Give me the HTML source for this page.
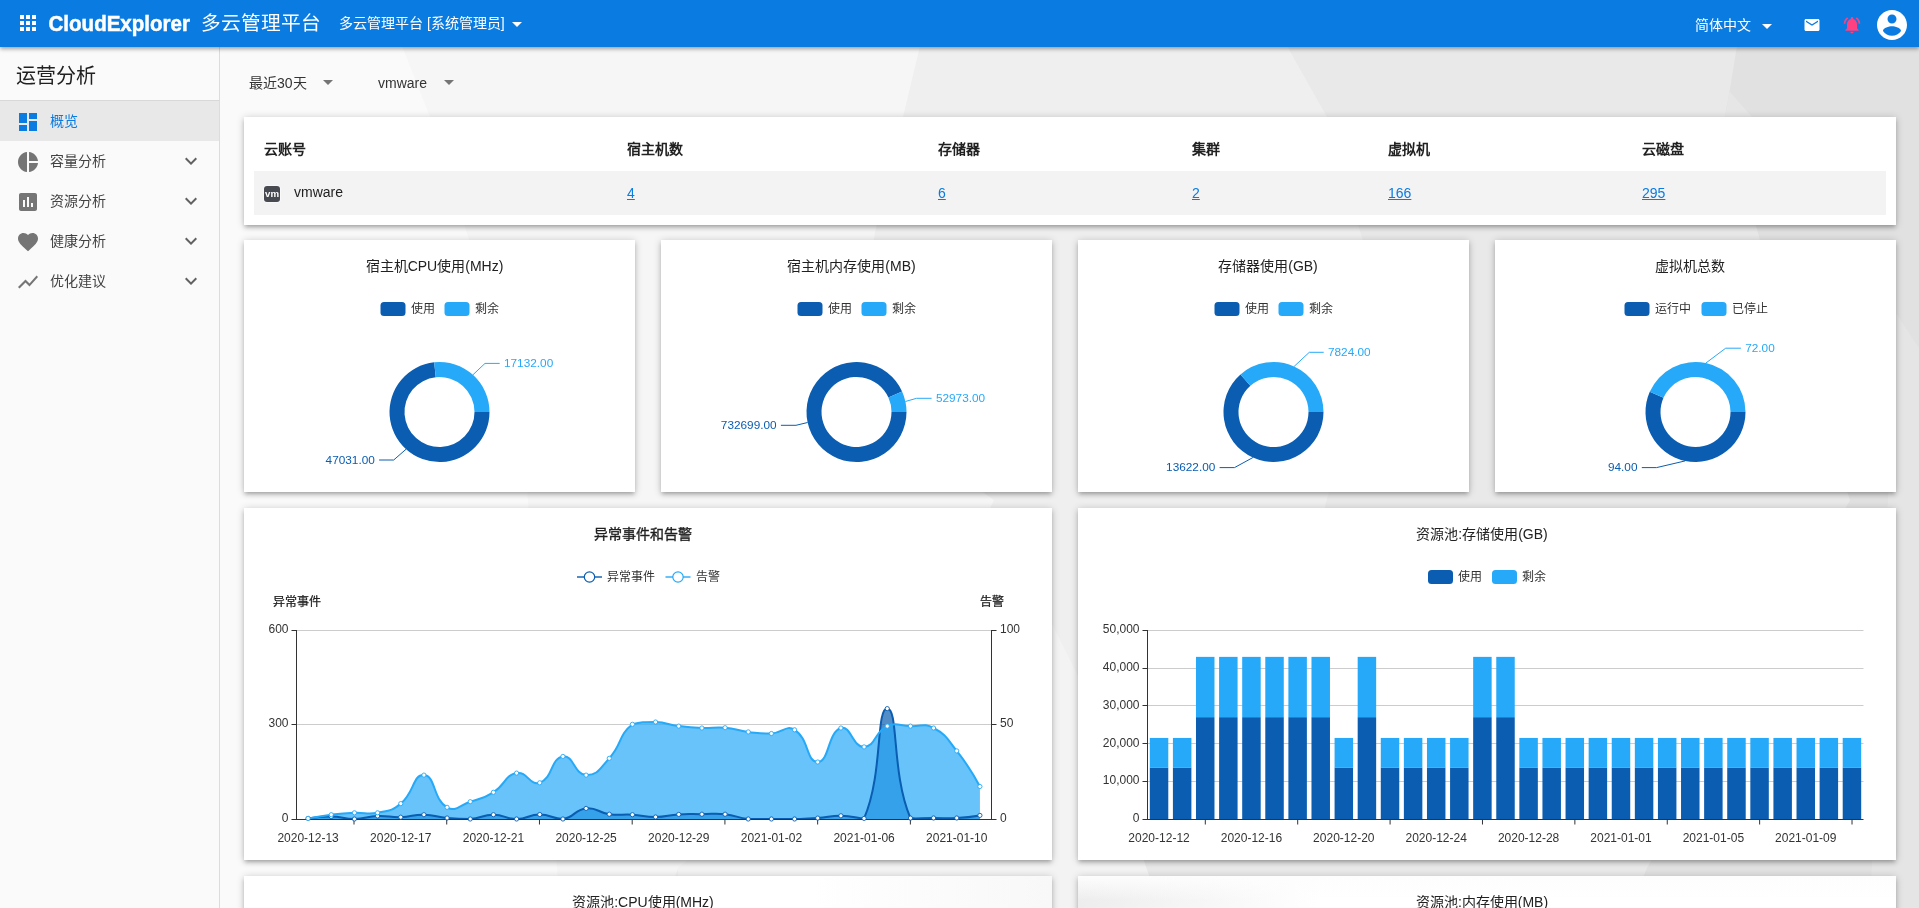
<!DOCTYPE html>
<html lang="zh-CN"><head><meta charset="utf-8"><title>CloudExplorer</title>
<style>
*{box-sizing:border-box;margin:0;padding:0}
html,body{width:1919px;height:908px;overflow:hidden}
body{position:relative;background:#f2f2f2;font-family:"Liberation Sans",sans-serif;color:#212121;font-size:14px}
.abs,.card,.ic,.t{position:absolute}
.t{white-space:nowrap;line-height:20px;margin-top:-10px}
.c{transform:translateX(-50%)}
.card{background:#fff;box-shadow:0 1px 8px 0 rgba(0,0,0,.2),0 3px 4px 0 rgba(0,0,0,.14),0 3px 3px -2px rgba(0,0,0,.12)}
.f12{font-size:12px;color:#333}
.b{font-weight:bold}
.lnk{color:#0a7be0;text-decoration:underline}
.mi{color:#424242}
svg text{font-family:"Liberation Sans",sans-serif}
#L{position:absolute;left:0;top:0;width:1919px;height:908px;will-change:transform}
</style></head><body><div id="L">
<svg class="abs" style="left:0;top:0" width="1919" height="908" viewBox="0 0 1919 908">
<rect x="220" y="0" width="1699" height="908" fill="#fafafa"/>
<polygon points="402,46 430,117 520,400 560,908 1919,908 1919,46" fill="#f6f6f6"/>
<polygon points="920,46 903,117 875,232 850,400 994,500 900,700 678,868 665,908 1919,908 1919,46" fill="#efefef"/>
<polygon points="1040,600 1090,700 1143,858 1150,878 1150,908 678,908 678,868 900,700" fill="#f3f3f3"/>
<polygon points="1287,46 1327,117 1380,300 1300,600 1143,858 1150,878 1150,908 1919,908 1919,46" fill="#e9e9e9"/>
<polygon points="1737,46 1729.5,91.6 1725,117 1760,240 1850,500 1647,868 1630,908 1919,908 1919,46" fill="#e1e1e1"/>
<polygon points="1729.5,91.6 1725,117 1752,117" fill="#e6e6e6"/>
<polygon points="1896,313 1919,348 1919,908 1870,908" fill="#e5e5e5"/>
</svg>
<div class="abs" style="left:0;top:46px;width:220px;height:862px;background:#fafafa;border-right:1px solid #dcdcdc"></div>
<div class="t " style="left:16px;top:76px;font-size:20px;line-height:28px;margin-top:-14px;color:#212121">运营分析</div>
<div class="abs" style="left:0;top:100px;width:219px;height:41px;background:#e8e8e8;border-top:1px solid #d8d8d8"></div>
<svg class="ic" style="left:16px;top:109.5px" width="24" height="24" viewBox="0 0 24 24"><path fill="#0a7be0" d="M3 13h8V3H3v10zm0 8h8v-6H3v6zm10 0h8V11h-8v10zm0-18v6h8V3h-8z"/></svg>
<div class="t " style="left:50px;top:120.5px;color:#0a7be0">概览</div>
<svg class="ic" style="left:16px;top:149.5px" width="24" height="24" viewBox="0 0 24 24"><path fill="#757575" d="M11 2v20c-5.07-.5-9-4.79-9-10s3.93-9.5 9-10zm2.03 0v8.99H22c-.47-4.74-4.24-8.52-8.97-8.99zm0 11.01V22c4.74-.47 8.5-4.25 8.97-8.99h-8.97z"/></svg>
<div class="t " style="left:50px;top:160.5px;color:#424242">容量分析</div>
<svg class="ic" style="left:179px;top:148.5px" width="24" height="24" viewBox="0 0 24 24"><path fill="#616161" d="M7.41 8.59L12 13.17l4.59-4.58L18 10l-6 6-6-6 1.41-1.41z"/></svg>
<svg class="ic" style="left:16px;top:189.5px" width="24" height="24" viewBox="0 0 24 24"><path fill="#757575" d="M19 3H5c-1.1 0-2 .9-2 2v14c0 1.1.9 2 2 2h14c1.1 0 2-.9 2-2V5c0-1.1-.9-2-2-2zM9 17H7v-7h2v7zm4 0h-2V7h2v10zm4 0h-2v-4h2v4z"/></svg>
<div class="t " style="left:50px;top:200.5px;color:#424242">资源分析</div>
<svg class="ic" style="left:179px;top:188.5px" width="24" height="24" viewBox="0 0 24 24"><path fill="#616161" d="M7.41 8.59L12 13.17l4.59-4.58L18 10l-6 6-6-6 1.41-1.41z"/></svg>
<svg class="ic" style="left:16px;top:229.5px" width="24" height="24" viewBox="0 0 24 24"><path fill="#757575" d="M12 21.35l-1.45-1.32C5.4 15.36 2 12.28 2 8.5 2 5.42 4.42 3 7.5 3c1.74 0 3.41.81 4.5 2.09C13.09 3.81 14.76 3 16.5 3 19.58 3 22 5.42 22 8.5c0 3.78-3.4 6.86-8.55 11.54L12 21.35z"/></svg>
<div class="t " style="left:50px;top:240.5px;color:#424242">健康分析</div>
<svg class="ic" style="left:179px;top:228.5px" width="24" height="24" viewBox="0 0 24 24"><path fill="#616161" d="M7.41 8.59L12 13.17l4.59-4.58L18 10l-6 6-6-6 1.41-1.41z"/></svg>
<svg class="ic" style="left:16px;top:269.5px" width="24" height="24" viewBox="0 0 24 24"><path fill="#757575" d="M3.5 18.49l6-6.01 4 4L22 6.92l-1.41-1.41-7.09 7.97-4-4L2 16.99z"/></svg>
<div class="t " style="left:50px;top:280.5px;color:#424242">优化建议</div>
<svg class="ic" style="left:179px;top:268.5px" width="24" height="24" viewBox="0 0 24 24"><path fill="#616161" d="M7.41 8.59L12 13.17l4.59-4.58L18 10l-6 6-6-6 1.41-1.41z"/></svg>
<div class="abs" style="left:0;top:0;width:1919px;height:46.5px;background:#0a7be0;box-shadow:0 2px 4px rgba(0,0,0,.35)"></div>
<svg class="ic" style="left:16px;top:11px" width="24" height="24" viewBox="0 0 24 24"><path fill="#fff" d="M4 8h4V4H4v4zm6 12h4v-4h-4v4zm-6 0h4v-4H4v4zm0-6h4v-4H4v4zm6 0h4v-4h-4v4zm6-10v4h4V4h-4zm-6 4h4V4h-4v4zm6 6h4v-4h-4v4zm0 6h4v-4h-4v4z"/></svg>
<svg class="abs" style="left:48px;top:8px" width="146" height="32"><text x="0.5" y="23" font-size="22" font-weight="bold" fill="#fff" stroke="#fff" stroke-width="0.5" textLength="141.5" lengthAdjust="spacingAndGlyphs">CloudExplorer</text></svg>
<div class="t " style="left:201px;top:23px;font-size:19.7px;color:#fff;line-height:28px;margin-top:-14px">多云管理平台</div>
<div class="t " style="left:339px;top:23px;color:#fff">多云管理平台 [系统管理员]</div>
<svg class="ic" style="left:505px;top:12px" width="24" height="24" viewBox="0 0 24 24"><path fill="#fff" d="M7 10l5 5 5-5z"/></svg>
<div class="t " style="left:1695px;top:25px;color:#fff">简体中文</div>
<svg class="ic" style="left:1755px;top:13.5px" width="24" height="24" viewBox="0 0 24 24"><path fill="#fff" d="M7 10l5 5 5-5z"/></svg>
<svg class="ic" style="left:1803px;top:15.7px" width="18" height="18" viewBox="0 0 24 24"><path fill="#fff" d="M20 4H4c-1.1 0-1.99.9-1.99 2L2 18c0 1.1.9 2 2 2h16c1.1 0 2-.9 2-2V6c0-1.1-.9-2-2-2zm0 4l-8 5-8-5V6l8 5 8-5v2z"/></svg>
<svg class="ic" style="left:1842px;top:14.7px" width="20" height="20" viewBox="0 0 24 24"><path fill="#ff4081" d="M7.58 4.08L6.15 2.65C3.75 4.48 2.17 7.3 2.03 10.5h2c.15-2.65 1.51-4.97 3.55-6.42zm12.39 6.42h2c-.15-3.2-1.73-6.02-4.12-7.85l-1.42 1.43c2.02 1.45 3.39 3.77 3.54 6.42zM18 11c0-3.07-1.64-5.64-4.5-6.32V4c0-.83-.67-1.5-1.5-1.5s-1.5.67-1.5 1.5v.68C7.63 5.36 6 7.92 6 11v5l-2 2v1h16v-1l-2-2v-5zm-6 11c.14 0 .27-.01.4-.04.65-.14 1.18-.58 1.44-1.18.1-.24.15-.5.15-.78h-4c.01 1.1.9 2 2.01 2z"/></svg>
<svg class="ic" style="left:1874px;top:6.7px" width="36" height="36" viewBox="0 0 24 24"><path fill="#fff" d="M12 2C6.48 2 2 6.48 2 12s4.48 10 10 10 10-4.48 10-10S17.52 2 12 2zm0 3c1.66 0 3 1.34 3 3s-1.34 3-3 3-3-1.34-3-3 1.34-3 3-3zm0 14.2c-2.5 0-4.71-1.28-6-3.22.03-1.99 4-3.08 6-3.08 1.99 0 5.97 1.09 6 3.08-1.29 1.94-3.5 3.22-6 3.22z"/></svg>
<div class="t " style="left:249px;top:83px;color:#333">最近30天</div>
<svg class="ic" style="left:315.5px;top:70px" width="24" height="24" viewBox="0 0 24 24"><path fill="#757575" d="M7 10l5 5 5-5z"/></svg>
<div class="t " style="left:378px;top:83px;color:#333">vmware</div>
<svg class="ic" style="left:436.5px;top:70px" width="24" height="24" viewBox="0 0 24 24"><path fill="#757575" d="M7 10l5 5 5-5z"/></svg>
<div class="card" style="left:244px;top:117px;width:1652px;height:108px"></div>
<div class="abs" style="left:254px;top:171px;width:1632px;height:44px;background:#f3f3f3"></div>
<div class="card" style="left:244px;top:240px;width:391px;height:252px"></div>
<div class="card" style="left:661px;top:240px;width:391px;height:252px"></div>
<div class="card" style="left:1078px;top:240px;width:391px;height:252px"></div>
<div class="card" style="left:1495px;top:240px;width:401px;height:252px"></div>
<div class="card" style="left:244px;top:508px;width:808px;height:352px"></div>
<div class="card" style="left:1078px;top:508px;width:818px;height:352px"></div>
<div class="card" style="left:244px;top:876px;width:808px;height:60px;background:linear-gradient(90deg,#fff 0,#fff 70%,#f8f8f8 100%)"></div>
<div class="card" style="left:1078px;top:876px;width:818px;height:60px;background:linear-gradient(180deg,#fdfdfd 0,rgba(255,255,255,0) 24px),linear-gradient(90deg,#ededed 0,#fff 240px)"></div>
<div class="t b" style="left:264px;top:149px;color:#212121">云账号</div>
<div class="t b" style="left:627px;top:149px;color:#212121">宿主机数</div>
<div class="t lnk" style="left:627px;top:193px;">4</div>
<div class="t b" style="left:938px;top:149px;color:#212121">存储器</div>
<div class="t lnk" style="left:938px;top:193px;">6</div>
<div class="t b" style="left:1192px;top:149px;color:#212121">集群</div>
<div class="t lnk" style="left:1192px;top:193px;">2</div>
<div class="t b" style="left:1388px;top:149px;color:#212121">虚拟机</div>
<div class="t lnk" style="left:1388px;top:193px;">166</div>
<div class="t b" style="left:1642px;top:149px;color:#212121">云磁盘</div>
<div class="t lnk" style="left:1642px;top:193px;">295</div>
<svg class="abs" style="left:263px;top:185px" width="18" height="18" viewBox="0 0 18 18"><rect x="0.5" y="0.5" width="17" height="17" rx="3.5" fill="#fff"/><rect x="1" y="1" width="16" height="16" rx="3" fill="#484a52"/><text x="2" y="11.7" font-size="9.5" font-weight="bold" fill="#fff" textLength="14" lengthAdjust="spacingAndGlyphs">vm</text></svg>
<div class="t " style="left:294px;top:192px;color:#212121">vmware</div>
<div class="t c" style="left:434.5px;top:266px;">宿主机CPU使用(MHz)</div>
<div class="t c" style="left:851.5px;top:266px;">宿主机内存使用(MB)</div>
<div class="t c" style="left:1268px;top:266px;">存储器使用(GB)</div>
<div class="t c" style="left:1690px;top:266px;">虚拟机总数</div>
<div class="t c" style="left:643px;top:534px;-webkit-text-stroke:0.35px #212121">异常事件和告警</div>
<div class="t c" style="left:1482px;top:534px;">资源池:存储使用(GB)</div>
<div class="t c" style="left:643px;top:902px;">资源池:CPU使用(MHz)</div>
<div class="t c" style="left:1482px;top:902px;">资源池:内存使用(MB)</div>
<div class="t f12" style="left:410.5px;top:308.5px;">使用</div>
<div class="t f12" style="left:474.5px;top:308.5px;">剩余</div>
<div class="t f12" style="left:827.5px;top:308.5px;">使用</div>
<div class="t f12" style="left:891.5px;top:308.5px;">剩余</div>
<div class="t f12" style="left:1244.5px;top:308.5px;">使用</div>
<div class="t f12" style="left:1308.5px;top:308.5px;">剩余</div>
<div class="t f12" style="left:1654.5px;top:308.5px;">运行中</div>
<div class="t f12" style="left:1731.5px;top:308.5px;">已停止</div>
<div class="t f12" style="left:1458px;top:576.5px;">使用</div>
<div class="t f12" style="left:1522px;top:576.5px;">剩余</div>
<div class="t f12" style="left:607px;top:576.5px;">异常事件</div>
<div class="t f12" style="left:695.5px;top:576.5px;">告警</div>
<div class="t f12 c" style="left:296.5px;top:602px;color:#222;-webkit-text-stroke:0.25px #222">异常事件</div>
<div class="t f12 c" style="left:991.5px;top:602px;color:#222;-webkit-text-stroke:0.25px #222">告警</div>
<svg class="abs" style="left:0;top:0" width="1919" height="908" viewBox="0 0 1919 908">
<path d="M489.5 412A50 50 0 1 1 434.17 362.29L435.77 377.2A35 35 0 1 0 474.5 412Z" fill="#0a5db1"/>
<path d="M434.17 362.29A50 50 0 0 1 489.5 412L474.5 412A35 35 0 0 0 435.77 377.2Z" fill="#26a9f8"/>
<polyline points="406.08,449.19 393.7,460 379.1,460" fill="none" stroke="#0a5db1" stroke-width="1"/>
<text x="374.8" y="463.7" fill="#0a5db1" font-size="11.8" text-anchor="end">47031.00</text>
<polyline points="472.92,374.81 485,363.4 499.7,363.4" fill="none" stroke="#26a9f8" stroke-width="1"/>
<text x="504" y="367.1" fill="#26a9f8" font-size="11.8" text-anchor="start">17132.00</text>
<path d="M906.5 412A50 50 0 1 1 902.08 391.45L888.41 397.61A35 35 0 1 0 891.5 412Z" fill="#0a5db1"/>
<path d="M902.08 391.45A50 50 0 0 1 906.5 412L891.5 412A35 35 0 0 0 888.41 397.61Z" fill="#26a9f8"/>
<polyline points="807.62,422.51 796,425.3 780.9,425.3" fill="none" stroke="#0a5db1" stroke-width="1"/>
<text x="776.6" y="429" fill="#0a5db1" font-size="11.8" text-anchor="end">732699.00</text>
<polyline points="905.38,401.49 916.6,398.3 931.6,398.3" fill="none" stroke="#26a9f8" stroke-width="1"/>
<text x="935.9" y="402" fill="#26a9f8" font-size="11.8" text-anchor="start">52973.00</text>
<path d="M1323.5 412A50 50 0 1 1 1240.48 374.46L1250.38 385.72A35 35 0 1 0 1308.5 412Z" fill="#0a5db1"/>
<path d="M1240.48 374.46A50 50 0 0 1 1323.5 412L1308.5 412A35 35 0 0 0 1250.38 385.72Z" fill="#26a9f8"/>
<polyline points="1252.9,457.56 1234.5,467.6 1219.6,467.6" fill="none" stroke="#0a5db1" stroke-width="1"/>
<text x="1215.3" y="471.3" fill="#0a5db1" font-size="11.8" text-anchor="end">13622.00</text>
<polyline points="1294.1,366.44 1309.3,352.3 1323.7,352.3" fill="none" stroke="#26a9f8" stroke-width="1"/>
<text x="1328" y="356" fill="#26a9f8" font-size="11.8" text-anchor="start">7824.00</text>
<path d="M1745.5 412A50 50 0 1 1 1649.77 391.78L1663.49 397.84A35 35 0 1 0 1730.5 412Z" fill="#0a5db1"/>
<path d="M1649.77 391.78A50 50 0 0 1 1745.5 412L1730.5 412A35 35 0 0 0 1663.49 397.84Z" fill="#26a9f8"/>
<polyline points="1685.17,460.92 1656.6,467.6 1641.8,467.6" fill="none" stroke="#0a5db1" stroke-width="1"/>
<text x="1637.5" y="471.3" fill="#0a5db1" font-size="11.8" text-anchor="end">94.00</text>
<polyline points="1705.83,363.08 1725.7,348.2 1740.9,348.2" fill="none" stroke="#26a9f8" stroke-width="1"/>
<text x="1745.2" y="351.9" fill="#26a9f8" font-size="11.8" text-anchor="start">72.00</text>
<rect x="380.5" y="302" width="25" height="14" rx="3.5" fill="#0a5db1"/>
<rect x="444.5" y="302" width="25" height="14" rx="3.5" fill="#26a9f8"/>
<rect x="797.5" y="302" width="25" height="14" rx="3.5" fill="#0a5db1"/>
<rect x="861.5" y="302" width="25" height="14" rx="3.5" fill="#26a9f8"/>
<rect x="1214.5" y="302" width="25" height="14" rx="3.5" fill="#0a5db1"/>
<rect x="1278.5" y="302" width="25" height="14" rx="3.5" fill="#26a9f8"/>
<rect x="1624.5" y="302" width="25" height="14" rx="3.5" fill="#0a5db1"/>
<rect x="1701.5" y="302" width="25" height="14" rx="3.5" fill="#26a9f8"/>
<rect x="1428" y="570" width="25" height="14" rx="3.5" fill="#0a5db1"/>
<rect x="1492" y="570" width="25" height="14" rx="3.5" fill="#26a9f8"/>
<line x1="577" y1="577" x2="602" y2="577" stroke="#0a5db1" stroke-width="2" stroke-opacity="0.7"/>
<circle cx="589.5" cy="577" r="5.2" fill="#fff" stroke="#0a5db1" stroke-width="1.2"/>
<line x1="665.5" y1="577" x2="690.5" y2="577" stroke="#26a9f8" stroke-width="2" stroke-opacity="0.7"/>
<circle cx="678" cy="577" r="5.2" fill="#fff" stroke="#26a9f8" stroke-width="1.2"/>
<line x1="296.5" y1="630.5" x2="991.5" y2="630.5" stroke="#ccc" stroke-width="1"/>
<line x1="296.5" y1="724.5" x2="991.5" y2="724.5" stroke="#ccc" stroke-width="1"/>
<path d="M308.08 818.4C308.08 818.4 319.68 816.35 331.25 816.5C342.85 816.65 342.85 819 354.42 819C366.01 818.87 365.96 816.45 377.58 816C389.13 815.55 389.19 817.52 400.75 817.2C412.36 816.87 412.36 814.5 423.92 814.7C435.52 814.9 435.45 816.92 447.08 818C458.61 819 458.76 819 470.25 819C481.93 818.17 481.83 814.7 493.42 814.7C505 814.7 505.01 819 516.58 819C528.18 818.95 528.17 814.5 539.75 814.5C551.33 814.5 551.78 819 562.92 819C574.94 817.42 574.13 809.64 586.08 808.4C597.29 807.24 597.49 812.6 609.25 814.2C620.66 815.75 620.86 814 632.42 814.7C644.03 815.4 644.01 817.07 655.58 817C667.17 816.92 667.13 815.1 678.75 814.4C690.3 813.7 690.33 814.25 701.92 814.2C713.5 814.15 713.62 813.01 725.08 814.2C736.79 815.41 736.54 817.79 748.25 819C759.71 819 759.83 819 771.42 819C783 819 783 819 794.58 819C806.17 818.77 806.19 818.9 817.75 818.1C829.36 817.3 829.34 815.73 840.92 815.8C852.51 815.88 860.1 819 864.08 818.4C883.27 774.02 875.65 708.68 887.25 708.6C898.82 708.6 891.22 772.78 910.42 818.1C914.39 819 922 818.03 933.58 818C945.17 817.98 945.2 818.65 956.75 818C968.37 817.35 979.92 815.4 979.92 815.4L979.92 819L308.08 819Z" fill="#0a5db1" fill-opacity="0.7"/>
<path d="M308.08 818.4C308.08 818.4 319.61 816.11 331.25 814.7C342.78 813.31 342.81 813.28 354.42 812.8C365.98 812.33 366.42 815.02 377.58 812.8C389.59 810.42 391.38 811.22 400.75 803.6C414.55 792.37 412.78 774.21 423.92 775.1C435.95 776.06 432.61 798.99 447.08 807.3C455.78 812.29 458.94 805.36 470.25 801.7C482.11 797.86 482.9 798.79 493.42 792.3C506.07 784.49 503.96 775.69 516.58 773.1C527.12 770.94 530.09 786.28 539.75 782.8C553.26 777.93 550.38 758.48 562.92 756.4C573.54 754.63 574.27 774.62 586.08 775.1C597.44 775.57 599.75 768.72 609.25 758.3C622.91 743.32 617.62 735.89 632.42 724.3C640.79 722 644.06 722 655.58 722C667.23 722.45 667.1 724.59 678.75 726.1C690.26 727.59 690.31 727.6 701.92 728C713.48 728.4 713.59 726.73 725.08 727.7C736.76 728.68 736.59 730.44 748.25 731.9C759.75 733.34 759.89 734.02 771.42 733.5C783.06 732.97 785.97 724.5 794.58 729.8C809.14 738.75 806.38 762.44 817.75 762C829.54 761.54 827.5 732.37 840.92 728C850.67 724.82 852.73 747.37 864.08 746.9C875.9 746.42 873.97 732.06 887.25 726.1C897.13 722 898.85 725.63 910.42 726.1C922.02 726.58 923.94 722.84 933.58 728C947.1 735.24 946.69 738.2 956.75 750.9C969.86 767.45 979.92 786.5 979.92 786.5L979.92 819L308.08 819Z" fill="#26a9f8" fill-opacity="0.7"/>
<path d="M308.08 818.4C308.08 818.4 319.68 816.35 331.25 816.5C342.85 816.65 342.85 819 354.42 819C366.01 818.87 365.96 816.45 377.58 816C389.13 815.55 389.19 817.52 400.75 817.2C412.36 816.87 412.36 814.5 423.92 814.7C435.52 814.9 435.45 816.92 447.08 818C458.61 819 458.76 819 470.25 819C481.93 818.17 481.83 814.7 493.42 814.7C505 814.7 505.01 819 516.58 819C528.18 818.95 528.17 814.5 539.75 814.5C551.33 814.5 551.78 819 562.92 819C574.94 817.42 574.13 809.64 586.08 808.4C597.29 807.24 597.49 812.6 609.25 814.2C620.66 815.75 620.86 814 632.42 814.7C644.03 815.4 644.01 817.07 655.58 817C667.17 816.92 667.13 815.1 678.75 814.4C690.3 813.7 690.33 814.25 701.92 814.2C713.5 814.15 713.62 813.01 725.08 814.2C736.79 815.41 736.54 817.79 748.25 819C759.71 819 759.83 819 771.42 819C783 819 783 819 794.58 819C806.17 818.77 806.19 818.9 817.75 818.1C829.36 817.3 829.34 815.73 840.92 815.8C852.51 815.88 860.1 819 864.08 818.4C883.27 774.02 875.65 708.68 887.25 708.6C898.82 708.6 891.22 772.78 910.42 818.1C914.39 819 922 818.03 933.58 818C945.17 817.98 945.2 818.65 956.75 818C968.37 817.35 979.92 815.4 979.92 815.4" fill="none" stroke="#0a5db1" stroke-width="2" stroke-linejoin="round"/>
<path d="M308.08 818.4C308.08 818.4 319.61 816.11 331.25 814.7C342.78 813.31 342.81 813.28 354.42 812.8C365.98 812.33 366.42 815.02 377.58 812.8C389.59 810.42 391.38 811.22 400.75 803.6C414.55 792.37 412.78 774.21 423.92 775.1C435.95 776.06 432.61 798.99 447.08 807.3C455.78 812.29 458.94 805.36 470.25 801.7C482.11 797.86 482.9 798.79 493.42 792.3C506.07 784.49 503.96 775.69 516.58 773.1C527.12 770.94 530.09 786.28 539.75 782.8C553.26 777.93 550.38 758.48 562.92 756.4C573.54 754.63 574.27 774.62 586.08 775.1C597.44 775.57 599.75 768.72 609.25 758.3C622.91 743.32 617.62 735.89 632.42 724.3C640.79 722 644.06 722 655.58 722C667.23 722.45 667.1 724.59 678.75 726.1C690.26 727.59 690.31 727.6 701.92 728C713.48 728.4 713.59 726.73 725.08 727.7C736.76 728.68 736.59 730.44 748.25 731.9C759.75 733.34 759.89 734.02 771.42 733.5C783.06 732.97 785.97 724.5 794.58 729.8C809.14 738.75 806.38 762.44 817.75 762C829.54 761.54 827.5 732.37 840.92 728C850.67 724.82 852.73 747.37 864.08 746.9C875.9 746.42 873.97 732.06 887.25 726.1C897.13 722 898.85 725.63 910.42 726.1C922.02 726.58 923.94 722.84 933.58 728C947.1 735.24 946.69 738.2 956.75 750.9C969.86 767.45 979.92 786.5 979.92 786.5" fill="none" stroke="#26a9f8" stroke-width="2" stroke-linejoin="round"/>
<path d="M296.5 630V820 M991.5 630V820 M296.5 819.5H991.5" stroke="#333" stroke-width="1" fill="none"/>
<path d="M291.5 630.5H296.5 M991.5 630.5H996.5M291.5 724.5H296.5 M991.5 724.5H996.5M291.5 819.5H296.5 M991.5 819.5H996.5M354 819.5V824.5M446.73 819.5V824.5M539.46 819.5V824.5M632.19 819.5V824.5M724.92 819.5V824.5M817.65 819.5V824.5M910.38 819.5V824.5" stroke="#333" stroke-width="1" fill="none"/>
<circle cx="308.08" cy="818.4" r="2.1" fill="#fff" stroke="#0a5db1" stroke-width="0.9"/>
<circle cx="331.25" cy="816.5" r="2.1" fill="#fff" stroke="#0a5db1" stroke-width="0.9"/>
<circle cx="354.42" cy="819" r="2.1" fill="#fff" stroke="#0a5db1" stroke-width="0.9"/>
<circle cx="377.58" cy="816" r="2.1" fill="#fff" stroke="#0a5db1" stroke-width="0.9"/>
<circle cx="400.75" cy="817.2" r="2.1" fill="#fff" stroke="#0a5db1" stroke-width="0.9"/>
<circle cx="423.92" cy="814.7" r="2.1" fill="#fff" stroke="#0a5db1" stroke-width="0.9"/>
<circle cx="447.08" cy="818" r="2.1" fill="#fff" stroke="#0a5db1" stroke-width="0.9"/>
<circle cx="470.25" cy="819" r="2.1" fill="#fff" stroke="#0a5db1" stroke-width="0.9"/>
<circle cx="493.42" cy="814.7" r="2.1" fill="#fff" stroke="#0a5db1" stroke-width="0.9"/>
<circle cx="516.58" cy="819" r="2.1" fill="#fff" stroke="#0a5db1" stroke-width="0.9"/>
<circle cx="539.75" cy="814.5" r="2.1" fill="#fff" stroke="#0a5db1" stroke-width="0.9"/>
<circle cx="562.92" cy="819" r="2.1" fill="#fff" stroke="#0a5db1" stroke-width="0.9"/>
<circle cx="586.08" cy="808.4" r="2.1" fill="#fff" stroke="#0a5db1" stroke-width="0.9"/>
<circle cx="609.25" cy="814.2" r="2.1" fill="#fff" stroke="#0a5db1" stroke-width="0.9"/>
<circle cx="632.42" cy="814.7" r="2.1" fill="#fff" stroke="#0a5db1" stroke-width="0.9"/>
<circle cx="655.58" cy="817" r="2.1" fill="#fff" stroke="#0a5db1" stroke-width="0.9"/>
<circle cx="678.75" cy="814.4" r="2.1" fill="#fff" stroke="#0a5db1" stroke-width="0.9"/>
<circle cx="701.92" cy="814.2" r="2.1" fill="#fff" stroke="#0a5db1" stroke-width="0.9"/>
<circle cx="725.08" cy="814.2" r="2.1" fill="#fff" stroke="#0a5db1" stroke-width="0.9"/>
<circle cx="748.25" cy="819" r="2.1" fill="#fff" stroke="#0a5db1" stroke-width="0.9"/>
<circle cx="771.42" cy="819" r="2.1" fill="#fff" stroke="#0a5db1" stroke-width="0.9"/>
<circle cx="794.58" cy="819" r="2.1" fill="#fff" stroke="#0a5db1" stroke-width="0.9"/>
<circle cx="817.75" cy="818.1" r="2.1" fill="#fff" stroke="#0a5db1" stroke-width="0.9"/>
<circle cx="840.92" cy="815.8" r="2.1" fill="#fff" stroke="#0a5db1" stroke-width="0.9"/>
<circle cx="864.08" cy="818.4" r="2.1" fill="#fff" stroke="#0a5db1" stroke-width="0.9"/>
<circle cx="887.25" cy="708.6" r="2.1" fill="#fff" stroke="#0a5db1" stroke-width="0.9"/>
<circle cx="910.42" cy="818.1" r="2.1" fill="#fff" stroke="#0a5db1" stroke-width="0.9"/>
<circle cx="933.58" cy="818" r="2.1" fill="#fff" stroke="#0a5db1" stroke-width="0.9"/>
<circle cx="956.75" cy="818" r="2.1" fill="#fff" stroke="#0a5db1" stroke-width="0.9"/>
<circle cx="979.92" cy="815.4" r="2.1" fill="#fff" stroke="#0a5db1" stroke-width="0.9"/>
<circle cx="308.08" cy="818.4" r="2.1" fill="#fff" stroke="#26a9f8" stroke-width="0.9"/>
<circle cx="331.25" cy="814.7" r="2.1" fill="#fff" stroke="#26a9f8" stroke-width="0.9"/>
<circle cx="354.42" cy="812.8" r="2.1" fill="#fff" stroke="#26a9f8" stroke-width="0.9"/>
<circle cx="377.58" cy="812.8" r="2.1" fill="#fff" stroke="#26a9f8" stroke-width="0.9"/>
<circle cx="400.75" cy="803.6" r="2.1" fill="#fff" stroke="#26a9f8" stroke-width="0.9"/>
<circle cx="423.92" cy="775.1" r="2.1" fill="#fff" stroke="#26a9f8" stroke-width="0.9"/>
<circle cx="447.08" cy="807.3" r="2.1" fill="#fff" stroke="#26a9f8" stroke-width="0.9"/>
<circle cx="470.25" cy="801.7" r="2.1" fill="#fff" stroke="#26a9f8" stroke-width="0.9"/>
<circle cx="493.42" cy="792.3" r="2.1" fill="#fff" stroke="#26a9f8" stroke-width="0.9"/>
<circle cx="516.58" cy="773.1" r="2.1" fill="#fff" stroke="#26a9f8" stroke-width="0.9"/>
<circle cx="539.75" cy="782.8" r="2.1" fill="#fff" stroke="#26a9f8" stroke-width="0.9"/>
<circle cx="562.92" cy="756.4" r="2.1" fill="#fff" stroke="#26a9f8" stroke-width="0.9"/>
<circle cx="586.08" cy="775.1" r="2.1" fill="#fff" stroke="#26a9f8" stroke-width="0.9"/>
<circle cx="609.25" cy="758.3" r="2.1" fill="#fff" stroke="#26a9f8" stroke-width="0.9"/>
<circle cx="632.42" cy="724.3" r="2.1" fill="#fff" stroke="#26a9f8" stroke-width="0.9"/>
<circle cx="655.58" cy="722" r="2.1" fill="#fff" stroke="#26a9f8" stroke-width="0.9"/>
<circle cx="678.75" cy="726.1" r="2.1" fill="#fff" stroke="#26a9f8" stroke-width="0.9"/>
<circle cx="701.92" cy="728" r="2.1" fill="#fff" stroke="#26a9f8" stroke-width="0.9"/>
<circle cx="725.08" cy="727.7" r="2.1" fill="#fff" stroke="#26a9f8" stroke-width="0.9"/>
<circle cx="748.25" cy="731.9" r="2.1" fill="#fff" stroke="#26a9f8" stroke-width="0.9"/>
<circle cx="771.42" cy="733.5" r="2.1" fill="#fff" stroke="#26a9f8" stroke-width="0.9"/>
<circle cx="794.58" cy="729.8" r="2.1" fill="#fff" stroke="#26a9f8" stroke-width="0.9"/>
<circle cx="817.75" cy="762" r="2.1" fill="#fff" stroke="#26a9f8" stroke-width="0.9"/>
<circle cx="840.92" cy="728" r="2.1" fill="#fff" stroke="#26a9f8" stroke-width="0.9"/>
<circle cx="864.08" cy="746.9" r="2.1" fill="#fff" stroke="#26a9f8" stroke-width="0.9"/>
<circle cx="887.25" cy="726.1" r="2.1" fill="#fff" stroke="#26a9f8" stroke-width="0.9"/>
<circle cx="910.42" cy="726.1" r="2.1" fill="#fff" stroke="#26a9f8" stroke-width="0.9"/>
<circle cx="933.58" cy="728" r="2.1" fill="#fff" stroke="#26a9f8" stroke-width="0.9"/>
<circle cx="956.75" cy="750.9" r="2.1" fill="#fff" stroke="#26a9f8" stroke-width="0.9"/>
<circle cx="979.92" cy="786.5" r="2.1" fill="#fff" stroke="#26a9f8" stroke-width="0.9"/>
<text x="288.5" y="632.9" text-anchor="end" font-size="12" fill="#333">600</text>
<text x="288.5" y="727.4" text-anchor="end" font-size="12" fill="#333">300</text>
<text x="288.5" y="821.9" text-anchor="end" font-size="12" fill="#333">0</text>
<text x="1000" y="632.9" font-size="12" fill="#333">100</text>
<text x="1000" y="727.4" font-size="12" fill="#333">50</text>
<text x="1000" y="821.9" font-size="12" fill="#333">0</text>
<text x="308.08" y="842" text-anchor="middle" font-size="12" fill="#333">2020-12-13</text>
<text x="400.75" y="842" text-anchor="middle" font-size="12" fill="#333">2020-12-17</text>
<text x="493.42" y="842" text-anchor="middle" font-size="12" fill="#333">2020-12-21</text>
<text x="586.08" y="842" text-anchor="middle" font-size="12" fill="#333">2020-12-25</text>
<text x="678.75" y="842" text-anchor="middle" font-size="12" fill="#333">2020-12-29</text>
<text x="771.42" y="842" text-anchor="middle" font-size="12" fill="#333">2021-01-02</text>
<text x="864.08" y="842" text-anchor="middle" font-size="12" fill="#333">2021-01-06</text>
<text x="956.75" y="842" text-anchor="middle" font-size="12" fill="#333">2021-01-10</text>
<line x1="1147.5" y1="781.5" x2="1863.5" y2="781.5" stroke="#ccc" stroke-width="1"/>
<line x1="1147.5" y1="743.5" x2="1863.5" y2="743.5" stroke="#ccc" stroke-width="1"/>
<line x1="1147.5" y1="705.5" x2="1863.5" y2="705.5" stroke="#ccc" stroke-width="1"/>
<line x1="1147.5" y1="668.5" x2="1863.5" y2="668.5" stroke="#ccc" stroke-width="1"/>
<line x1="1147.5" y1="630.5" x2="1863.5" y2="630.5" stroke="#ccc" stroke-width="1"/>
<rect x="1149.81" y="767.51" width="18.48" height="51.49" fill="#0a5db1"/>
<rect x="1149.81" y="737.93" width="18.48" height="29.57" fill="#26a9f8"/>
<rect x="1172.91" y="767.51" width="18.48" height="51.49" fill="#0a5db1"/>
<rect x="1172.91" y="737.93" width="18.48" height="29.57" fill="#26a9f8"/>
<rect x="1196" y="717.15" width="18.48" height="101.85" fill="#0a5db1"/>
<rect x="1196" y="656.87" width="18.48" height="60.28" fill="#26a9f8"/>
<rect x="1219.1" y="717.15" width="18.48" height="101.85" fill="#0a5db1"/>
<rect x="1219.1" y="656.87" width="18.48" height="60.28" fill="#26a9f8"/>
<rect x="1242.2" y="717.15" width="18.48" height="101.85" fill="#0a5db1"/>
<rect x="1242.2" y="656.87" width="18.48" height="60.28" fill="#26a9f8"/>
<rect x="1265.29" y="717.15" width="18.48" height="101.85" fill="#0a5db1"/>
<rect x="1265.29" y="656.87" width="18.48" height="60.28" fill="#26a9f8"/>
<rect x="1288.39" y="717.15" width="18.48" height="101.85" fill="#0a5db1"/>
<rect x="1288.39" y="656.87" width="18.48" height="60.28" fill="#26a9f8"/>
<rect x="1311.49" y="717.15" width="18.48" height="101.85" fill="#0a5db1"/>
<rect x="1311.49" y="656.87" width="18.48" height="60.28" fill="#26a9f8"/>
<rect x="1334.58" y="767.51" width="18.48" height="51.49" fill="#0a5db1"/>
<rect x="1334.58" y="737.93" width="18.48" height="29.57" fill="#26a9f8"/>
<rect x="1357.68" y="717.15" width="18.48" height="101.85" fill="#0a5db1"/>
<rect x="1357.68" y="656.87" width="18.48" height="60.28" fill="#26a9f8"/>
<rect x="1380.78" y="767.51" width="18.48" height="51.49" fill="#0a5db1"/>
<rect x="1380.78" y="737.93" width="18.48" height="29.57" fill="#26a9f8"/>
<rect x="1403.87" y="767.51" width="18.48" height="51.49" fill="#0a5db1"/>
<rect x="1403.87" y="737.93" width="18.48" height="29.57" fill="#26a9f8"/>
<rect x="1426.97" y="767.51" width="18.48" height="51.49" fill="#0a5db1"/>
<rect x="1426.97" y="737.93" width="18.48" height="29.57" fill="#26a9f8"/>
<rect x="1450.07" y="767.51" width="18.48" height="51.49" fill="#0a5db1"/>
<rect x="1450.07" y="737.93" width="18.48" height="29.57" fill="#26a9f8"/>
<rect x="1473.16" y="717.15" width="18.48" height="101.85" fill="#0a5db1"/>
<rect x="1473.16" y="656.87" width="18.48" height="60.28" fill="#26a9f8"/>
<rect x="1496.26" y="717.15" width="18.48" height="101.85" fill="#0a5db1"/>
<rect x="1496.26" y="656.87" width="18.48" height="60.28" fill="#26a9f8"/>
<rect x="1519.36" y="767.51" width="18.48" height="51.49" fill="#0a5db1"/>
<rect x="1519.36" y="737.93" width="18.48" height="29.57" fill="#26a9f8"/>
<rect x="1542.45" y="767.51" width="18.48" height="51.49" fill="#0a5db1"/>
<rect x="1542.45" y="737.93" width="18.48" height="29.57" fill="#26a9f8"/>
<rect x="1565.55" y="767.51" width="18.48" height="51.49" fill="#0a5db1"/>
<rect x="1565.55" y="737.93" width="18.48" height="29.57" fill="#26a9f8"/>
<rect x="1588.65" y="767.51" width="18.48" height="51.49" fill="#0a5db1"/>
<rect x="1588.65" y="737.93" width="18.48" height="29.57" fill="#26a9f8"/>
<rect x="1611.75" y="767.51" width="18.48" height="51.49" fill="#0a5db1"/>
<rect x="1611.75" y="737.93" width="18.48" height="29.57" fill="#26a9f8"/>
<rect x="1634.84" y="767.51" width="18.48" height="51.49" fill="#0a5db1"/>
<rect x="1634.84" y="737.93" width="18.48" height="29.57" fill="#26a9f8"/>
<rect x="1657.94" y="767.51" width="18.48" height="51.49" fill="#0a5db1"/>
<rect x="1657.94" y="737.93" width="18.48" height="29.57" fill="#26a9f8"/>
<rect x="1681.04" y="767.51" width="18.48" height="51.49" fill="#0a5db1"/>
<rect x="1681.04" y="737.93" width="18.48" height="29.57" fill="#26a9f8"/>
<rect x="1704.13" y="767.51" width="18.48" height="51.49" fill="#0a5db1"/>
<rect x="1704.13" y="737.93" width="18.48" height="29.57" fill="#26a9f8"/>
<rect x="1727.23" y="767.51" width="18.48" height="51.49" fill="#0a5db1"/>
<rect x="1727.23" y="737.93" width="18.48" height="29.57" fill="#26a9f8"/>
<rect x="1750.33" y="767.51" width="18.48" height="51.49" fill="#0a5db1"/>
<rect x="1750.33" y="737.93" width="18.48" height="29.57" fill="#26a9f8"/>
<rect x="1773.42" y="767.51" width="18.48" height="51.49" fill="#0a5db1"/>
<rect x="1773.42" y="737.93" width="18.48" height="29.57" fill="#26a9f8"/>
<rect x="1796.52" y="767.51" width="18.48" height="51.49" fill="#0a5db1"/>
<rect x="1796.52" y="737.93" width="18.48" height="29.57" fill="#26a9f8"/>
<rect x="1819.62" y="767.51" width="18.48" height="51.49" fill="#0a5db1"/>
<rect x="1819.62" y="737.93" width="18.48" height="29.57" fill="#26a9f8"/>
<rect x="1842.71" y="767.51" width="18.48" height="51.49" fill="#0a5db1"/>
<rect x="1842.71" y="737.93" width="18.48" height="29.57" fill="#26a9f8"/>
<path d="M1147.5 630V820 M1147.5 819.5H1863.5" stroke="#333" stroke-width="1" fill="none"/>
<text x="1139.5" y="822.1" text-anchor="end" font-size="12" fill="#333">0</text>
<text x="1139.5" y="784.3" text-anchor="end" font-size="12" fill="#333">10,000</text>
<text x="1139.5" y="746.5" text-anchor="end" font-size="12" fill="#333">20,000</text>
<text x="1139.5" y="708.7" text-anchor="end" font-size="12" fill="#333">30,000</text>
<text x="1139.5" y="670.9" text-anchor="end" font-size="12" fill="#333">40,000</text>
<text x="1139.5" y="633.1" text-anchor="end" font-size="12" fill="#333">50,000</text>
<path d="M1142.5 819.5H1147.5M1142.5 781.5H1147.5M1142.5 743.5H1147.5M1142.5 705.5H1147.5M1142.5 668.5H1147.5M1142.5 630.5H1147.5M1205.3 819.5V824.5M1297.69 819.5V824.5M1390.08 819.5V824.5M1482.47 819.5V824.5M1574.86 819.5V824.5M1667.25 819.5V824.5M1759.64 819.5V824.5M1852.03 819.5V824.5" stroke="#333" stroke-width="1" fill="none"/>
<text x="1159.05" y="842" text-anchor="middle" font-size="12" fill="#333">2020-12-12</text>
<text x="1251.44" y="842" text-anchor="middle" font-size="12" fill="#333">2020-12-16</text>
<text x="1343.82" y="842" text-anchor="middle" font-size="12" fill="#333">2020-12-20</text>
<text x="1436.21" y="842" text-anchor="middle" font-size="12" fill="#333">2020-12-24</text>
<text x="1528.6" y="842" text-anchor="middle" font-size="12" fill="#333">2020-12-28</text>
<text x="1620.98" y="842" text-anchor="middle" font-size="12" fill="#333">2021-01-01</text>
<text x="1713.37" y="842" text-anchor="middle" font-size="12" fill="#333">2021-01-05</text>
<text x="1805.76" y="842" text-anchor="middle" font-size="12" fill="#333">2021-01-09</text>
</svg>
</div></body></html>
